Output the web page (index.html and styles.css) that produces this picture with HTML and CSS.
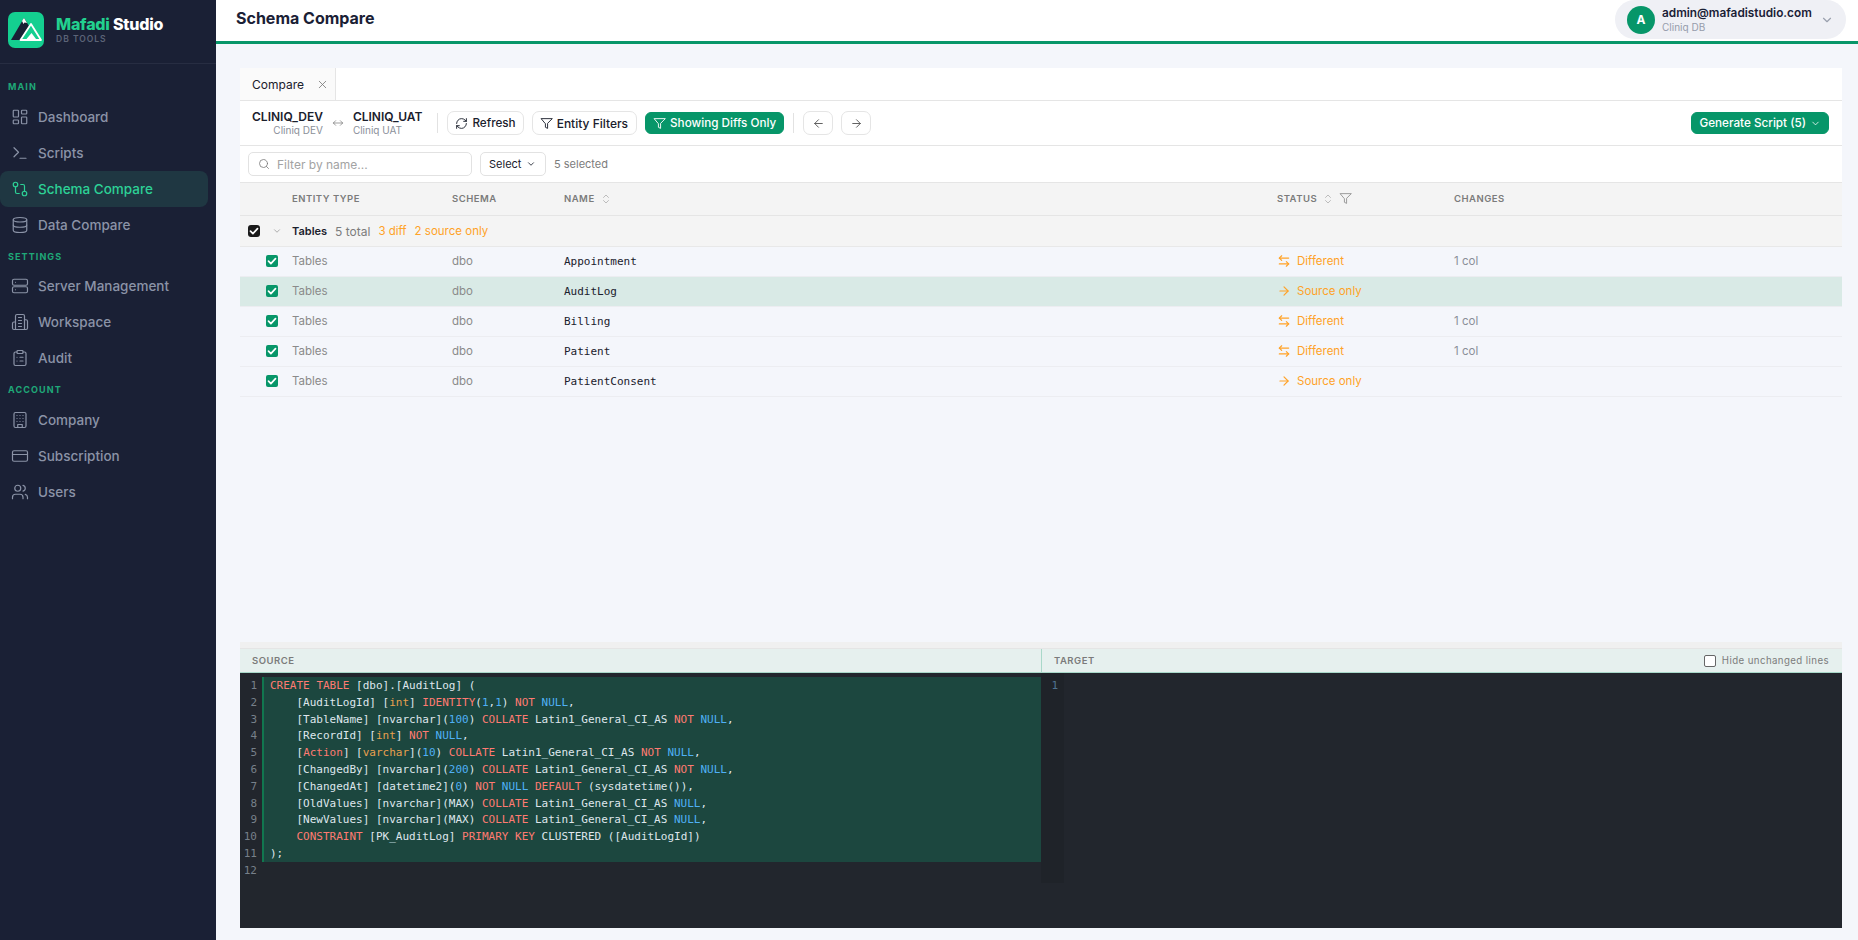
FILE: index.html
```html
<!DOCTYPE html>
<html lang="en">
<head>
    <meta charset="UTF-8">
    <title>Schema Compare - Mafadi Studio</title>
    <link rel="stylesheet" href="styles.css">
</head>
<body>
    <aside class="sidebar">
        <div class="brand">
            <div class="brand-logo">
                <svg viewBox="0 0 36 36" width="36" height="36">
                    <path d="M3 28 L16 6 L21 14 L12 28 Z" fill="#1a2035"/>
                    <path d="M14 9 L16 6 L19 11 L16.5 10.5 L15.5 12 Z" fill="#fff"/>
                    <path d="M12.5 28 L23 12 L33 28 Z" fill="none" stroke="#fff" stroke-width="1.8" stroke-linejoin="round"/>
                    <path d="M18.5 27 L23.5 21 L28 27 Z" fill="#fff"/>
                </svg>
            </div>
            <div>
                <div class="brand-name"><span class="green">Mafadi</span> Studio</div>
                <div class="brand-sub">DB TOOLS</div>
            </div>
        </div>
        <nav class="nav">
            <div class="nav-label first">MAIN</div>
            <a class="nav-item">
                <svg class="ico" viewBox="0 0 24 24"><rect x="3" y="3" width="7" height="9" rx="1"/><rect x="14" y="3" width="7" height="5" rx="1"/><rect x="14" y="12" width="7" height="9" rx="1"/><rect x="3" y="16" width="7" height="5" rx="1"/></svg>
                Dashboard
            </a>
            <a class="nav-item">
                <svg class="ico" viewBox="0 0 24 24"><path d="M4 17l6-6-6-6"/><path d="M12 19h8"/></svg>
                Scripts
            </a>
            <a class="nav-item active">
                <svg class="ico" viewBox="0 0 24 24"><circle cx="18" cy="18" r="3"/><circle cx="6" cy="6" r="3"/><path d="M13 6h3a2 2 0 0 1 2 2v7"/><path d="M11 18H8a2 2 0 0 1-2-2V9"/></svg>
                Schema Compare
            </a>
            <a class="nav-item">
                <svg class="ico" viewBox="0 0 24 24"><ellipse cx="12" cy="5" rx="9" ry="3"/><path d="M3 5v14c0 1.7 4 3 9 3s9-1.3 9-3V5"/><path d="M3 12c0 1.7 4 3 9 3s9-1.3 9-3"/></svg>
                Data Compare
            </a>
            <div class="nav-label">SETTINGS</div>
            <a class="nav-item">
                <svg class="ico" viewBox="0 0 24 24"><rect x="2" y="3" width="20" height="8" rx="2"/><rect x="2" y="13" width="20" height="8" rx="2"/><path d="M6 7h.01M6 17h.01"/></svg>
                Server Management
            </a>
            <a class="nav-item">
                <svg class="ico" viewBox="0 0 24 24"><path d="M6 22V4a2 2 0 0 1 2-2h8a2 2 0 0 1 2 2v18z"/><path d="M6 12H4a2 2 0 0 0-2 2v6a2 2 0 0 0 2 2h2"/><path d="M18 9h2a2 2 0 0 1 2 2v9a2 2 0 0 1-2 2h-2"/><path d="M10 6h4M10 10h4M10 14h4M10 18h4"/></svg>
                Workspace
            </a>
            <a class="nav-item">
                <svg class="ico" viewBox="0 0 24 24"><rect x="8" y="2" width="8" height="4" rx="1"/><path d="M16 4h2a2 2 0 0 1 2 2v14a2 2 0 0 1-2 2H6a2 2 0 0 1-2-2V6a2 2 0 0 1 2-2h2"/><path d="M12 11h4M12 16h4M8 11h.01M8 16h.01"/></svg>
                Audit
            </a>
            <div class="nav-label tight">ACCOUNT</div>
            <a class="nav-item">
                <svg class="ico" viewBox="0 0 24 24"><rect x="4" y="2" width="16" height="20" rx="2"/><path d="M9 22v-4h6v4"/><path d="M8 6h.01M12 6h.01M16 6h.01M8 10h.01M12 10h.01M16 10h.01M8 14h.01M12 14h.01M16 14h.01"/></svg>
                Company
            </a>
            <a class="nav-item">
                <svg class="ico" viewBox="0 0 24 24"><rect x="2" y="5" width="20" height="14" rx="2"/><path d="M2 10h20"/></svg>
                Subscription
            </a>
            <a class="nav-item">
                <svg class="ico" viewBox="0 0 24 24"><path d="M16 21v-2a4 4 0 0 0-4-4H6a4 4 0 0 0-4 4v2"/><circle cx="9" cy="7" r="4"/><path d="M22 21v-2a4 4 0 0 0-3-3.87"/><path d="M16 3.13a4 4 0 0 1 0 7.75"/></svg>
                Users
            </a>
        </nav>
    </aside>

    <div class="page">
        <header class="topbar">
            <h1 class="page-title">Schema Compare</h1>
            <div class="user-pill">
                <div class="avatar">A</div>
                <div class="user-text">
                    <div class="user-email">admin@mafadistudio.com</div>
                    <div class="user-db">Cliniq DB</div>
                </div>
                <svg class="ico pill-chevron" viewBox="0 0 24 24"><path d="M6 9l6 6 6-6"/></svg>
            </div>
        </header>

        <main class="content">
            <div class="card">
                <div class="tabs">
                    <div class="tab">
                        Compare
                        <svg class="ico tab-close" viewBox="0 0 24 24"><path d="M18 6L6 18M6 6l12 12"/></svg>
                    </div>
                </div>

                <div class="toolbar">
                    <div class="db db-right">
                        <div class="db-name">CLINIQ_DEV</div>
                        <div class="db-sub">Cliniq DEV</div>
                    </div>
                    <svg class="ico db-arrow" viewBox="0 0 24 24"><path d="M8 8l-4 4 4 4"/><path d="M16 8l4 4-4 4"/><path d="M4 12h16"/></svg>
                    <div class="db db-target">
                        <div class="db-name">CLINIQ_UAT</div>
                        <div class="db-sub">Cliniq UAT</div>
                    </div>
                    <div class="vline"></div>
                    <button class="btn">
                        <svg class="ico" viewBox="0 0 24 24"><path d="M3 12a9 9 0 0 1 9-9 9.75 9.75 0 0 1 6.74 2.74L21 8"/><path d="M21 3v5h-5"/><path d="M21 12a9 9 0 0 1-9 9 9.75 9.75 0 0 1-6.74-2.74L3 16"/><path d="M8 16H3v5"/></svg>
                        Refresh
                    </button>
                    <button class="btn btn-filters">
                        <svg class="ico" viewBox="0 0 24 24"><path d="M22 3H2l8 9.46V19l4 2v-8.54z"/></svg>
                        Entity Filters
                    </button>
                    <button class="btn btn-green">
                        <svg class="ico" viewBox="0 0 24 24"><path d="M22 3H2l8 9.46V19l4 2v-8.54z"/></svg>
                        Showing Diffs Only
                    </button>
                    <div class="vline"></div>
                    <button class="btn btn-icon"><svg class="ico" viewBox="0 0 24 24"><path d="M19 12H5"/><path d="M12 19l-7-7 7-7"/></svg></button>
                    <button class="btn btn-icon"><svg class="ico" viewBox="0 0 24 24"><path d="M5 12h14"/><path d="M12 5l7 7-7 7"/></svg></button>
                    <button class="btn btn-green btn-generate">
                        Generate Script (5)
                        <svg class="ico" viewBox="0 0 24 24"><path d="M6 9l6 6 6-6"/></svg>
                    </button>
                </div>

                <div class="filterbar">
                    <div class="search">
                        <svg class="ico" viewBox="0 0 24 24"><circle cx="11" cy="11" r="8"/><path d="M21 21l-4.3-4.3"/></svg>
                        <span>Filter by name...</span>
                    </div>
                    <div class="select">Select <svg class="ico" viewBox="0 0 24 24"><path d="M6 9l6 6 6-6"/></svg></div>
                    <span class="sel-count">5 selected</span>
                </div>

                <div class="grid-row grid-head">
                    <div></div>
                    <div>ENTITY TYPE</div>
                    <div>SCHEMA</div>
                    <div class="head-cell">NAME <svg class="ico sort" viewBox="0 0 24 24"><path d="M7 15l5 5 5-5"/><path d="M7 9l5-5 5 5"/></svg></div>
                    <div class="head-cell">STATUS <svg class="ico sort" viewBox="0 0 24 24"><path d="M7 15l5 5 5-5"/><path d="M7 9l5-5 5 5"/></svg> <svg class="ico head-filter" viewBox="0 0 24 24"><path d="M22 3H2l8 9.46V19l4 2v-8.54z"/></svg></div>
                    <div>CHANGES</div>
                </div>

                <div class="group-row">
                    <span class="check check-dark"><svg viewBox="0 0 12 12"><path d="M2.5 6.2l2.4 2.4 4.6-5"/></svg></span>
                    <svg class="ico group-chevron" viewBox="0 0 24 24"><path d="M6 9l6 6 6-6"/></svg>
                    <span class="group-name">Tables</span>
                    <span class="group-count">5 total</span>
                    <span class="orange group-diff">3 diff</span>
                    <span class="orange">2 source only</span>
                </div>

                <div class="grid-row row">
                    <div class="cell-check"><span class="check"><svg viewBox="0 0 12 12"><path d="M2.5 6.2l2.4 2.4 4.6-5"/></svg></span></div>
                    <div class="muted">Tables</div>
                    <div class="muted">dbo</div>
                    <div class="mono">Appointment</div>
                    <div class="status"><svg class="ico" viewBox="0 0 24 24"><path d="M8 3L4 7l4 4"/><path d="M4 7h16"/><path d="M16 21l4-4-4-4"/><path d="M20 17H4"/></svg>Different</div>
                    <div class="changes">1 col</div>
                </div>
                <div class="grid-row row selected">
                    <div class="cell-check"><span class="check"><svg viewBox="0 0 12 12"><path d="M2.5 6.2l2.4 2.4 4.6-5"/></svg></span></div>
                    <div class="muted">Tables</div>
                    <div class="muted">dbo</div>
                    <div class="mono">AuditLog</div>
                    <div class="status"><svg class="ico" viewBox="0 0 24 24"><path d="M5 12h14"/><path d="M12 5l7 7-7 7"/></svg>Source only</div>
                    <div class="changes"></div>
                </div>
                <div class="grid-row row">
                    <div class="cell-check"><span class="check"><svg viewBox="0 0 12 12"><path d="M2.5 6.2l2.4 2.4 4.6-5"/></svg></span></div>
                    <div class="muted">Tables</div>
                    <div class="muted">dbo</div>
                    <div class="mono">Billing</div>
                    <div class="status"><svg class="ico" viewBox="0 0 24 24"><path d="M8 3L4 7l4 4"/><path d="M4 7h16"/><path d="M16 21l4-4-4-4"/><path d="M20 17H4"/></svg>Different</div>
                    <div class="changes">1 col</div>
                </div>
                <div class="grid-row row">
                    <div class="cell-check"><span class="check"><svg viewBox="0 0 12 12"><path d="M2.5 6.2l2.4 2.4 4.6-5"/></svg></span></div>
                    <div class="muted">Tables</div>
                    <div class="muted">dbo</div>
                    <div class="mono">Patient</div>
                    <div class="status"><svg class="ico" viewBox="0 0 24 24"><path d="M8 3L4 7l4 4"/><path d="M4 7h16"/><path d="M16 21l4-4-4-4"/><path d="M20 17H4"/></svg>Different</div>
                    <div class="changes">1 col</div>
                </div>
                <div class="grid-row row">
                    <div class="cell-check"><span class="check"><svg viewBox="0 0 12 12"><path d="M2.5 6.2l2.4 2.4 4.6-5"/></svg></span></div>
                    <div class="muted">Tables</div>
                    <div class="muted">dbo</div>
                    <div class="mono">PatientConsent</div>
                    <div class="status"><svg class="ico" viewBox="0 0 24 24"><path d="M5 12h14"/><path d="M12 5l7 7-7 7"/></svg>Source only</div>
                    <div class="changes"></div>
                </div>

                <section class="diff">
                    <div class="diff-head">
                        <div class="diff-title diff-source">SOURCE</div>
                        <div class="diff-title diff-target">
                            TARGET
                            <label class="hide-lines"><span class="hide-box"></span>Hide unchanged lines</label>
                        </div>
                    </div>
                    <div class="diff-body">
                        <div class="pane pane-source">
                            <div class="gutter">
                                <div>1</div><div>2</div><div>3</div><div>4</div><div>5</div><div>6</div>
                                <div>7</div><div>8</div><div>9</div><div>10</div><div>11</div><div>12</div>
                            </div>
                            <div class="code">
<div class="ln add"><b>CREATE</b> <b>TABLE</b> [dbo].[AuditLog] (</div>
<div class="ln add">    [AuditLogId] [<i>int</i>] <b>IDENTITY</b>(<u>1</u>,<u>1</u>) <b>NOT</b> <u>NULL</u>,</div>
<div class="ln add">    [TableName] [nvarchar](<u>100</u>) <b>COLLATE</b> Latin1_General_CI_AS <b>NOT</b> <u>NULL</u>,</div>
<div class="ln add">    [RecordId] [<i>int</i>] <b>NOT</b> <u>NULL</u>,</div>
<div class="ln add">    [<b>Action</b>] [<i>varchar</i>](<u>10</u>) <b>COLLATE</b> Latin1_General_CI_AS <b>NOT</b> <u>NULL</u>,</div>
<div class="ln add">    [ChangedBy] [nvarchar](<u>200</u>) <b>COLLATE</b> Latin1_General_CI_AS <b>NOT</b> <u>NULL</u>,</div>
<div class="ln add">    [ChangedAt] [datetime2](<u>0</u>) <b>NOT</b> <u>NULL</u> <b>DEFAULT</b> (sysdatetime()),</div>
<div class="ln add">    [OldValues] [nvarchar](MAX) <b>COLLATE</b> Latin1_General_CI_AS <u>NULL</u>,</div>
<div class="ln add">    [NewValues] [nvarchar](MAX) <b>COLLATE</b> Latin1_General_CI_AS <u>NULL</u>,</div>
<div class="ln add">    <b>CONSTRAINT</b> [PK_AuditLog] <b>PRIMARY</b> <b>KEY</b> CLUSTERED ([AuditLogId])</div>
<div class="ln add">);</div>
<div class="ln">&nbsp;</div>
                            </div>
                        </div>
                        <div class="pane pane-target">
                            <div class="gutter gutter-target"><div>1</div></div>
                        </div>
                    </div>
                </section>
            </div>
        </main>
    </div>
</body>
</html>
```

FILE: styles.css
```css
* {
    box-sizing: border-box;
}

html, body {
    margin: 0;
    height: 100%;
    overflow: hidden;
}

body {
    display: flex;
    font-family: Inter, "Noto Sans", sans-serif;
    font-size: 12px;
    background-color: #f4f6fb;
    color: #1a202c;
}

.ico {
    width: 14px;
    height: 14px;
    flex: none;
    fill: none;
    stroke: currentColor;
    stroke-width: 2;
    stroke-linecap: round;
    stroke-linejoin: round;
}

/* sidebar */
.sidebar {
    width: 216px;
    flex: none;
    background-color: #1a2035;
    color: #8b93a7;
}

.brand {
    height: 64px;
    padding: 12px 8px 0;
    display: flex;
    gap: 12px;
    border-bottom: 1px solid #272d42;
}

.brand-logo {
    width: 36px;
    height: 36px;
    border-radius: 7px;
    background-color: #14cf90;
}

.brand-name {
    font-size: 16px;
    font-weight: 800;
    color: #fff;
    letter-spacing: -0.2px;
    margin-top: 3px;
    line-height: 18px;
}

.green {
    color: #22d08f;
}

.brand-sub {
    font-size: 8.5px;
    font-weight: 600;
    letter-spacing: 1px;
    color: #5c6478;
    margin-top: 1px;
}

.nav-label {
    font-size: 9px;
    font-weight: 700;
    letter-spacing: 1.1px;
    color: #1fa878;
    padding-left: 8px;
    height: 18px;
    line-height: 18px;
    margin-top: 5px;
    margin-bottom: 2px;
}

.nav-label.first {
    margin-top: 14px;
    margin-bottom: 3px;
}

.nav-label.tight {
    margin-top: 5px;
    margin-bottom: 3px;
}

.nav-item {
    display: flex;
    align-items: center;
    gap: 9px;
    height: 36px;
    width: 208px;
    padding-left: 11px;
    font-size: 13.5px;
    font-weight: 500;
    border-radius: 8px;
}

.nav-item .ico {
    width: 18px;
    height: 18px;
    stroke-width: 1.6;
}

.nav-item.active {
    background-color: #1f3742;
    color: #2dd196;
}

/* top */
.page {
    flex: 1;
    min-width: 0;
    display: flex;
    flex-direction: column;
}

.topbar {
    height: 44px;
    flex: none;
    display: flex;
    align-items: center;
    justify-content: space-between;
    background-color: #fff;
    border-bottom: 3px solid #079669;
    padding: 0 12px 0 20px;
}

.page-title {
    margin: -5px 0 0;
    font-size: 16px;
    font-weight: 700;
    color: #1a2035;
}

.user-pill {
    width: 231px;
    height: 39px;
    align-self: flex-start;
    display: flex;
    align-items: center;
    gap: 7px;
    padding: 0 12px;
    background-color: #eff0f5;
    border-radius: 20px;
}

.avatar {
    width: 28px;
    height: 28px;
    flex: none;
    border-radius: 50%;
    background-color: #079669;
    color: #fff;
    font-weight: 700;
    font-size: 12px;
    display: flex;
    align-items: center;
    justify-content: center;
}

.user-text {
    flex: 1;
}

.user-email {
    font-size: 11.8px;
    font-weight: 600;
    color: #1a2035;
    line-height: 15px;
}

.user-db {
    font-size: 10px;
    color: #969cab;
    line-height: 13px;
}

.pill-chevron {
    color: #9aa0ae;
}

/* card */
.content {
    flex: 1;
    min-height: 0;
    padding: 24px 16px 12px 24px;
    display: flex;
}

.card {
    flex: 1;
    min-width: 0;
    display: flex;
    flex-direction: column;
}

.tabs {
    height: 33px;
    flex: none;
    background-color: #fff;
    border-bottom: 1px solid #e5e5e5;
    display: flex;
}

.tab {
    width: 96px;
    display: flex;
    align-items: center;
    justify-content: space-between;
    padding: 0 6px 0 12px;
    background-color: #fafafa;
    border-right: 1px solid #e5e5e5;
    font-size: 12px;
    color: #1a202c;
}

.tab-close {
    width: 13px;
    height: 13px;
    color: #777;
    stroke-width: 1.5;
}

.toolbar {
    height: 45px;
    flex: none;
    background-color: #fff;
    border-bottom: 1px solid #e5e5e5;
    display: flex;
    align-items: center;
    padding: 0 13px 0 12px;
}

.db {
    display: flex;
    flex-direction: column;
}

.db-right {
    align-items: flex-end;
}

.db-target {
    margin-right: 6px;
}

.db-name {
    font-size: 12px;
    font-weight: 600;
    color: #1a202c;
    line-height: 15px;
}

.db-sub {
    font-size: 10px;
    color: #8a8f99;
    line-height: 13px;
}

.db-arrow {
    width: 14px;
    height: 14px;
    margin: 0 8px;
    color: #777;
    stroke-width: 1.2;
}

.vline {
    width: 1px;
    height: 20px;
    background-color: #e2e2e2;
    margin: 0 9px;
}

.btn {
    height: 24px;
    display: flex;
    align-items: center;
    gap: 4px;
    padding: 0 7px;
    border: 1px solid #e5e5e5;
    border-radius: 7px;
    background-color: #fff;
    color: #1a202c;
    font-family: inherit;
    font-size: 11.7px;
    font-weight: 500;
    margin-right: 8px;
}

.btn .ico {
    width: 13px;
    height: 13px;
    stroke-width: 1.7;
}

.btn-filters {
    font-size: 12px;
    padding-right: 8px;
}

.btn-green {
    height: 22px;
    border-radius: 6px;
    background-color: #079669;
    border-color: #079669;
    color: #fff;
    margin-right: 0;
}

.btn-icon {
    width: 30px;
    padding: 0;
    justify-content: center;
    color: #555;
}

.btn-generate {
    margin-left: auto;
}

.btn-generate .ico {
    width: 11px;
    height: 11px;
}

.filterbar {
    height: 37px;
    flex: none;
    background-color: #fff;
    border-bottom: 1px solid #e5e5e5;
    display: flex;
    align-items: center;
    padding: 0 8px;
}

.search {
    width: 224px;
    height: 24px;
    display: flex;
    align-items: center;
    gap: 7px;
    padding: 0 9px;
    border: 1px solid #e2e2e2;
    border-radius: 5px;
    color: #a3a3a3;
    font-size: 12px;
    margin-right: 8px;
}

.search .ico {
    width: 12px;
    height: 12px;
    color: #777;
    stroke-width: 1.6;
}

.select {
    width: 66px;
    height: 24px;
    display: flex;
    align-items: center;
    gap: 5px;
    padding: 0 8px;
    border: 1px solid #e2e2e2;
    border-radius: 5px;
    font-size: 11px;
    color: #1a202c;
    margin-right: 8px;
}

.select .ico {
    width: 10px;
    height: 10px;
}

.sel-count {
    font-size: 11px;
    color: #7c7c7c;
}

/* table */
.grid-row {
    display: grid;
    grid-template-columns: 52px 160px 112px minmax(0, 1fr) 177px 388px;
    align-items: center;
}

.grid-head {
    height: 33px;
    flex: none;
    padding-bottom: 1px;
    background-color: #f4f4f4;
    border-bottom: 1px solid #e5e5e5;
    font-size: 9.5px;
    font-weight: 600;
    letter-spacing: 0.5px;
    color: #7b7b7b;
}

.head-cell {
    display: flex;
    align-items: center;
    gap: 5px;
}

.sort {
    width: 12px;
    height: 12px;
    color: #aaa;
    stroke-width: 1.5;
}

.head-filter {
    width: 13px;
    height: 13px;
    color: #888;
    stroke-width: 1.5;
}

.group-row {
    height: 31px;
    flex: none;
    background-color: #f4f4f4;
    border-bottom: 1px solid #e8e8e8;
    display: flex;
    align-items: center;
    padding-left: 8px;
    font-size: 11.5px;
    color: #7c7c7c;
}

.group-chevron {
    width: 10px;
    height: 10px;
    margin: 0 10px 0 12px;
    color: #888;
    stroke-width: 1.6;
}

.group-name {
    font-weight: 600;
    font-size: 11px;
    color: #1a202c;
    margin-right: 8px;
}

.group-count {
    font-size: 12px;
    margin-right: 8px;
}

.group-diff {
    margin-right: 8px;
}

.orange {
    color: #ffa227;
}

.check {
    width: 12px;
    height: 12px;
    flex: none;
    display: block;
    border-radius: 2px;
    background-color: #079669;
}

.check svg {
    display: block;
    width: 12px;
    height: 12px;
    fill: none;
    stroke: #fff;
    stroke-width: 1.7;
    stroke-linecap: round;
    stroke-linejoin: round;
}

.check-dark {
    background-color: #1a1a1a;
    border-radius: 3px;
}

.row {
    height: 30px;
    flex: none;
    padding-bottom: 1px;
    border-bottom: 1px solid #ecedf1;
    font-size: 11.5px;
}

.row.selected {
    background-color: #d9eae6;
}

.cell-check {
    padding-left: 26px;
}

.muted {
    color: #8a8a8a;
}

.mono {
    font-family: "DejaVu Sans Mono", monospace;
    font-size: 11px;
    color: #1a202c;
}

.status {
    display: flex;
    align-items: center;
    gap: 6px;
    color: #ffa227;
    font-size: 11.5px;
}

.status .ico {
    width: 14px;
    height: 14px;
    stroke-width: 2;
}

.changes {
    color: #8a8f99;
    font-size: 11.5px;
}

/* diff */
.diff {
    margin-top: auto;
    flex: none;
    padding-top: 6px;
    background-color: #f0f0f0;
}

.diff-head {
    height: 25px;
    display: flex;
    background-color: #e6f0ee;
    border-top: 1px solid #e5e5e5;
    border-bottom: 1px solid #a9d8c9;
}

.diff-title {
    font-size: 9.5px;
    font-weight: 600;
    letter-spacing: 0.5px;
    color: #7b7b7b;
    display: flex;
    align-items: center;
}

.diff-source {
    width: 801px;
    padding-left: 12px;
}

.diff-target {
    flex: 1;
    padding: 0 13px 0 12px;
    border-left: 1px solid #a9d8c9;
    justify-content: space-between;
}

.hide-lines {
    display: flex;
    align-items: center;
    gap: 6px;
    font-size: 9.7px;
    font-weight: 400;
    letter-spacing: 0.4px;
    color: #7c7c7c;
}

.hide-box {
    width: 12px;
    height: 12px;
    border: 1px solid #666;
    border-radius: 2px;
    background-color: #fff;
}

.diff-body {
    height: 255px;
    display: flex;
    background-color: #22262d;
    font-family: "DejaVu Sans Mono", monospace;
    font-size: 11px;
    line-height: 16.8px;
    color: #dfe6ec;
}

.pane {
    display: flex;
    padding-top: 4px;
}

.pane-source {
    width: 801px;
}

.pane-target {
    flex: 1;
    padding-top: 0;
}

.gutter {
    width: 22px;
    flex: none;
    padding-top: 1px;
    padding-right: 5px;
    text-align: right;
    color: #77808a;
}

.gutter-target {
    width: 23px;
    height: 210px;
    padding-top: 5px;
    padding-right: 6px;
    background-color: #1f2329;
    color: #4f7291;
}

.code {
    flex: 1;
}

.ln {
    padding-top: 1px;
    padding-left: 6px;
    border-left: 2px solid transparent;
    white-space: pre;
    height: 16.8px;
}

.ln.add {
    background-color: #1c473f;
    border-left-color: #11774f;
}

.ln b {
    font-weight: 400;
    color: #ff7b72;
}

.ln i {
    font-style: normal;
    color: #e8a04e;
}

.ln u {
    text-decoration: none;
    color: #4fb0f5;
}
```
